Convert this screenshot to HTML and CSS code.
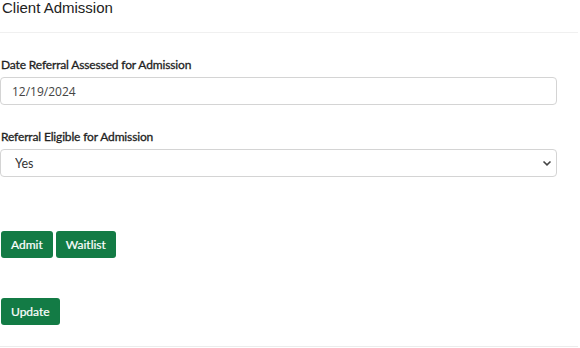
FILE: index.html
```html
<!DOCTYPE html>
<html lang="en">
<head>
	<meta charset="UTF-8">
	<title>Client Admission</title>
	<link rel="stylesheet" href="styles.css">
</head>
<body>
	<div class="panel">
		<div class="panel-head">Client Admission</div>
		<div class="panel-body">
			<div class="field">
				<label for="assessed">Date Referral Assessed for Admission</label>
				<input id="assessed" class="control date" type="text" value="12/19/2024">
			</div>
			<div class="field">
				<label for="eligible">Referral Eligible for Admission</label>
				<div class="select-wrap">
					<select id="eligible" class="control">
						<option>Yes</option>
						<option>No</option>
					</select>
					<svg class="caret" width="10" height="8" viewBox="0 0 10 8"><path d="M1.5 2.5 5 5.8 8.5 2.5" fill="none" stroke="#444" stroke-width="1.6"/></svg>
				</div>
			</div>
			<div class="actions">
				<button class="btn">Admit</button>
				<button class="btn">Waitlist</button>
			</div>
			<div class="actions update">
				<button class="btn">Update</button>
			</div>
		</div>
	</div>
</body>
</html>
```
FILE: styles.css
```css
*{
	margin: 0;
	padding: 0;
	box-sizing: border-box;
}
body{
	background: #fff;
	font-family: "Lato", "Liberation Sans", sans-serif;
	color: #212529;
}
.panel{
	width: 578px;
	height: 347px;
	border-bottom: 1px solid #ececec;
}
.panel-head{
	height: 33px;
	padding: 0 0 0 2px;
	font-family: "Liberation Sans", Arial, sans-serif;
	font-size: 15px;
	line-height: 16px;
	color: #222;
	border-bottom: 1px solid #f0f0f0;
}
.panel-body{
	padding: 24px 21px 0 0;
}
.field{
	margin-bottom: 24px;
}
.field label{
	display: block;
	padding-left: 1px;
	font-size: 12px;
	letter-spacing: -0.15px;
	font-weight: 400;
	-webkit-text-stroke: 0.3px #222;
	color: #222;
	line-height: 16px;
	margin-bottom: 4px;
}
.control{
	display: block;
	width: 557px;
	height: 28px;
	border: 1px solid #d4d4d4;
	border-radius: 4px;
	background: #fff;
	font-size: 12.5px;
	color: #333;
	outline: none;
}
.date{
	padding-left: 11px;
	font-family: "Open Sans", "Liberation Sans", sans-serif;
	font-size: 12px;
	color: #444;
}
.select-wrap{
	position: relative;
	width: 557px;
}
select.control{
	appearance: none;
	-webkit-appearance: none;
	padding-left: 14px;
	font-family: "Lato", sans-serif;
}
.caret{
	position: absolute;
	right: 5px;
	top: 10px;
	pointer-events: none;
}
.actions{
	display: flex;
	gap: 3px;
	padding-left: 1px;
	margin-top: 54px;
}
.update{
	margin-top: 40px;
}
.btn{
	height: 27px;
	padding: 0 10px;
	border: none;
	border-radius: 3px;
	background: #137b45;
	color: #fff;
	font-family: "Lato", sans-serif;
	font-size: 12px;
	font-weight: 400;
	-webkit-text-stroke: 0.2px #fff;
	cursor: pointer;
}
```
